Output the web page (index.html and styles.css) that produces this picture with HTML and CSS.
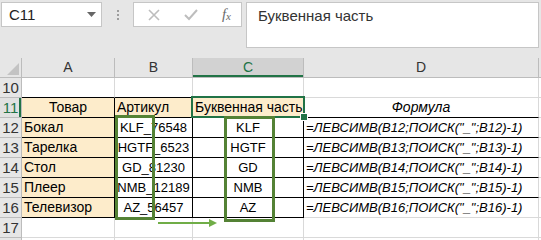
FILE: index.html
```html
<!DOCTYPE html>
<html lang="ru">
<head>
    <meta charset="UTF-8">
    <title>Буквенная часть</title>
    <link rel="stylesheet" href="styles.css">
</head>
<body>
    <div class="toolbar">
        <div class="namebox">
            <span>C11</span>
            <svg class="caret" width="9" height="5" viewBox="0 0 9 5"><path d="M0 0h9L4.5 5z" fill="#666"/></svg>
        </div>
        <div class="grip"><i></i><i></i><i></i></div>
        <div class="fxbox">
            <svg width="12" height="12" viewBox="0 0 12 12"><path d="M1 1l10 10M11 1L1 11" stroke="#bdbdbd" stroke-width="1.6"/></svg>
            <svg width="14" height="12" viewBox="0 0 14 12"><path d="M1 6l4 4 8-9" stroke="#bdbdbd" stroke-width="2" fill="none"/></svg>
            <span class="fx">f<sub>x</sub></span>
        </div>
        <div class="formula">Буквенная часть</div>
    </div>

    <div class="sheet">
        <table class="grid">
            <colgroup>
                <col style="width:22px"><col style="width:93px"><col style="width:78px"><col style="width:111px"><col style="width:235px"><col>
            </colgroup>
            <tr class="colhead">
                <th class="corner"><svg width="12" height="12" viewBox="0 0 12 12"><path d="M12 0v12H0z" fill="#c3c3c3"/></svg></th>
                <th>A</th><th>B</th><th class="sel">C</th><th>D</th><th></th>
            </tr>
            <tr>
                <th class="rowhead">10</th>
                <td class="bb"></td><td class="bb"></td><td class="bb"></td><td></td><td></td>
            </tr>
            <tr>
                <th class="rowhead sel">11</th>
                <td class="b fill center">Товар</td><td class="b fill">Артикул</td><td class="b fill">Буквенная часть</td><td class="bb italic center">Формула</td><td></td>
            </tr>
            <tr>
                <th class="rowhead">12</th>
                <td class="b fill">Бокал</td><td class="b center code">KLF_76548</td><td class="b center code">KLF</td><td class="bb formula-cell">=ЛЕВСИМВ(B12;ПОИСК("_";B12)-1)</td><td></td>
            </tr>
            <tr>
                <th class="rowhead">13</th>
                <td class="b fill">Тарелка</td><td class="b center code">HGTF_6523</td><td class="b center code">HGTF</td><td class="bb formula-cell">=ЛЕВСИМВ(B13;ПОИСК("_";B13)-1)</td><td></td>
            </tr>
            <tr>
                <th class="rowhead">14</th>
                <td class="b fill">Стол</td><td class="b center code">GD_81230</td><td class="b center code">GD</td><td class="bb formula-cell">=ЛЕВСИМВ(B14;ПОИСК("_";B14)-1)</td><td></td>
            </tr>
            <tr>
                <th class="rowhead">15</th>
                <td class="b fill">Плеер</td><td class="b center code">NMB_12189</td><td class="b center code">NMB</td><td class="bb formula-cell">=ЛЕВСИМВ(B15;ПОИСК("_";B15)-1)</td><td></td>
            </tr>
            <tr>
                <th class="rowhead">16</th>
                <td class="b fill">Телевизор</td><td class="b center code">AZ_56457</td><td class="b center code">AZ</td><td class="formula-cell">=ЛЕВСИМВ(B16;ПОИСК("_";B16)-1)</td><td></td>
            </tr>
            <tr>
                <th class="rowhead">17</th>
                <td></td><td></td><td></td><td></td><td></td>
            </tr>
            <tr>
                <th class="rowhead"></th>
                <td></td><td></td><td></td><td></td><td></td>
            </tr>
        </table>

        <!-- selection and annotations over the grid -->
        <div class="selection"><span class="handle"></span></div>
        <div class="mark mark-b"></div>
        <div class="mark mark-c"></div>
        <svg class="arrow" width="62" height="10" viewBox="0 0 62 10">
            <path d="M0 5h52" stroke="#70ad47" stroke-width="2"/>
            <path d="M51 1l8 4-8 4z" fill="#70ad47"/>
        </svg>
    </div>
</body>
</html>
```

FILE: styles.css
```css
body {
    margin: 0;
    width: 541px;
    height: 240px;
    overflow: hidden;
    background-color: #e6e6e6;
    font-family: "Liberation Sans", Arial, sans-serif;
    color: #000;
}

.toolbar {
    display: flex;
    align-items: flex-start;
    height: 58px;
    padding-top: 2px;
    box-sizing: border-box;
}

.namebox {
    width: 101px;
    height: 25px;
    margin-left: 1px;
    background: #fff;
    border: 1px solid #c6c6c6;
    box-sizing: border-box;
    display: flex;
    align-items: center;
    justify-content: space-between;
    padding: 0 5px 0 7px;
    font-size: 15px;
    color: #222;
}

.grip {
    width: 31px;
    height: 25px;
    display: flex;
    flex-direction: column;
    align-items: center;
    justify-content: center;
    gap: 2px;
}

.grip i {
    width: 2px;
    height: 2px;
    background: #9d9d9d;
}

.fxbox {
    width: 109px;
    height: 25px;
    background: #fff;
    border: 1px solid #c6c6c6;
    box-sizing: border-box;
    display: flex;
    align-items: center;
    justify-content: space-between;
    padding: 0 10px 0 14px;
}

.fx {
    font-family: "Liberation Serif", serif;
    font-style: italic;
    font-size: 15px;
    color: #6b6b6b;
}

.fx sub {
    font-size: 11px;
    vertical-align: -1px;
}

.formula {
    flex: 1;
    height: 46px;
    margin-left: 4px;
    margin-right: 2px;
    background: #fff;
    border: 1px solid #c6c6c6;
    box-sizing: border-box;
    padding: 4px 11px;
    font-size: 15px;
    color: #333;
}

.sheet {
    position: relative;
    height: 182px;
    overflow: hidden;
    background: #fff;
}

.grid {
    border-collapse: separate;
    border-spacing: 0;
    table-layout: fixed;
    width: 560px;
    font-size: 14px;
}

.grid th,
.grid td {
    height: 19px;
    padding: 0 2px;
    line-height: 19px;
    white-space: nowrap;
    box-sizing: content-box;
    border-right: 1px solid #d9d9d9;
    border-bottom: 1px solid #d9d9d9;
    text-align: left;
}

.grid th {
    background: #e6e6e6;
    font-weight: normal;
    font-size: 15px;
    color: #333;
    text-align: center;
    border-right-color: #bcbcbc;
    border-bottom-color: #bcbcbc;
}

.colhead th {
    font-size: 14px;
}

.colhead th.sel {
    background: #d2d2d2;
    color: #217346;
    box-shadow: inset 0 -2px 0 #217346;
}

.corner {
    vertical-align: bottom;
}

.corner svg {
    display: block;
    margin-left: auto;
    margin-bottom: 2px;
}

.rowhead {
    padding: 0 !important;
}

.rowhead.sel {
    background: #e1e1e1 !important;
    color: #217346 !important;
    box-shadow: inset -2px 0 0 #217346;
}

.grid td.b {
    border-right-color: #000;
    border-bottom-color: #000;
}

.grid td.bb {
    border-bottom-color: #000;
}

.fill {
    background: #fdeccb;
}

.grid td.center {
    text-align: center;
}

.grid td.code {
    font-size: 13px;
}

.italic {
    font-style: italic;
}

.formula-cell {
    font-style: italic;
    font-size: 13px;
}

.selection {
    position: absolute;
    left: 191px;
    top: 38px;
    width: 114px;
    height: 22px;
    border: 2px solid #217346;
    box-sizing: border-box;
}

.handle {
    position: absolute;
    right: -5px;
    bottom: -5px;
    width: 6px;
    height: 6px;
    background: #217346;
    border: 1px solid #fff;
}

.mark {
    position: absolute;
    border: 3px solid #548235;
    box-sizing: border-box;
}

.mark-b {
    left: 115px;
    top: 57px;
    width: 40px;
    height: 105px;
}

.mark-c {
    left: 224px;
    top: 58px;
    width: 51px;
    height: 106px;
}

.arrow {
    position: absolute;
    left: 158px;
    top: 160px;
}
```
